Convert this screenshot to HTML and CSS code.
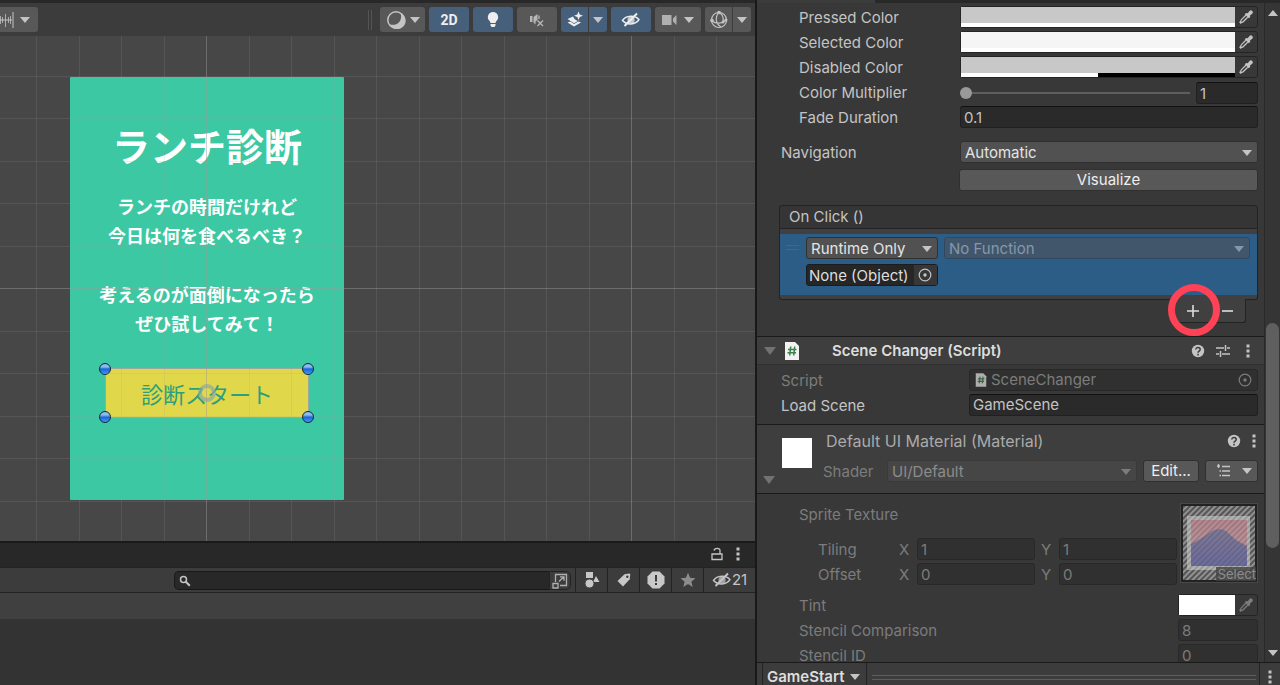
FILE: index.html
```html
<!DOCTYPE html>
<html lang="ja">
<head>
<meta charset="utf-8">
<title>GameStart</title>
<link rel="stylesheet" href="styles.css">
</head>
<body>
<svg class="defs" aria-hidden="true">
  <symbol id="dropper" viewBox="0 0 14 14"><path d="M7.200 3l1.500.2 1.800-2.200a1.900 1.900 0 0 1 2.700 2.700l-2.200 1.800.2 1.500-1.500 1.300-4-4z" fill="currentColor"/><path d="M6.800 5.300L2.500 9.600c-.7.700-.7 1.200-.8 1.900l-.7.800.7.700.8-.7c.7-.1 1.200-.1 1.900-.8L8.700 7.200" fill="none" stroke="currentColor" stroke-width="1.300"/></symbol>
  <symbol id="target" viewBox="0 0 14 14"><circle cx="7" cy="7" r="5.800" fill="none" stroke="currentColor" stroke-width="1.200"/><circle cx="7" cy="7" r="1.700" fill="currentColor"/></symbol>
  <symbol id="script" viewBox="0 0 16 18"><path d="M1 0h10l4 4v14H1z" fill="#f2f2f2"/><path d="M6.700 4.500l-1 9M10.700 4.500l-1 9M4 7.500h8.500M3.500 10.800H12" fill="none" stroke="#3d8049" stroke-width="1.500"/></symbol>
  <symbol id="help" viewBox="0 0 14 14"><circle cx="7" cy="7" r="6.200" fill="currentColor"/><path d="M4.800 5.500c0-2.700 4.400-2.600 4.400 0 0 1.500-2.200 1.600-2.200 3.200M7 9.800v1.600" fill="none" stroke="#3c3c3c" stroke-width="1.500"/></symbol>
  <symbol id="kebab" viewBox="0 0 4 14"><path d="M.5.500h3v3h-3zM.5 5.500h3v3h-3zM.5 10.500h3v3h-3z" fill="currentColor"/></symbol>
  <symbol id="hidden" viewBox="0 0 20 16"><path d="M1.500 8.500C5 3.200 14 2.800 18 7.700 14.500 13 5.500 13.300 1.500 8.500z" fill="none" stroke="currentColor" stroke-width="1.500"/><path d="M10 4.500a3.600 3.600 0 1 0 .1 7.200 3.600 3.600 0 0 0-.1-7.200z" fill="currentColor" opacity=".75"/><path d="M3.500 14L16 1.500" stroke="currentColor" stroke-width="1.900"/></symbol>
</svg>

<main class="left">
  <div class="toolbar">
    <button class="tool wave" aria-label="Snap"><svg width="14" height="18" viewBox="0 0 14 18"><path d="M.5 5v8M2.500 6v6M5.500 3v13M8.500 6v6M10.500 5v8" stroke="#aaa" fill="none"/><path d="M0 9h12M13 1v16" stroke="#c4c4c4"/></svg><i class="tri"></i></button>
    <span class="grip"></span>
    <button class="tool shade" aria-label="Draw mode"><svg width="20" height="20" viewBox="0 0 20 20"><circle cx="10" cy="10" r="8.200" fill="none" stroke="#c4c4c4" stroke-width="1.500"/><path d="M14.500 2.800a8.500 8.500 0 1 1-11 11.500c8 2.500 13.500-4 11-11.500z" fill="#c4c4c4"/></svg><i class="tri"></i></button>
    <button class="tool on">2D</button>
    <button class="tool on" aria-label="Lighting"><svg width="14" height="18" viewBox="0 0 14 18"><path d="M7 1a5.200 5.200 0 0 0-3 9.400L4.500 12h5l.5-1.600A5.200 5.200 0 0 0 7 1zM4.500 13h5v1.500L8.500 16h-3l-1-1.500z" fill="#eee"/></svg></button>
    <button class="tool" aria-label="Audio"><svg width="16" height="16" viewBox="0 0 16 16"><path d="M1 4h2.500v6H1zM4.500 5L8.500 2v6L6.500 9.500v3l-2-2z" fill="#b8b8b8"/><path d="M8.500 8.500l5.500 5.500M14 8.500L8.500 14M10 3.500v3.500" fill="none" stroke="#b8b8b8" stroke-width="1.300"/></svg></button>
    <span class="pair"><button class="tool on fx" aria-label="Effects"><svg width="18" height="18" viewBox="0 0 18 18"><path d="M12.500.500l1.200 3 3.300 1.300-3.300 1.300-1.200 3-1.200-3L8 4.800l3.300-1.300z" fill="#eee"/><path d="M1.500 8L7 5.500 8.500 8l3 2L15 8.200 8 12.200z" fill="#eee"/><path d="M1.500 11.500l3-1 3.500 2.400 4.500-2.400 2.500 1L8 15.500z" fill="#eee"/></svg></button><button class="tool on mini" aria-label="Effects menu"><i class="tri"></i></button></span>
    <button class="tool on" aria-label="Visibility"><svg width="20" height="16" color="#eee"><use href="#hidden"/></svg></button>
    <button class="tool cam" aria-label="Camera"><svg width="16" height="12" viewBox="0 0 16 12"><path d="M0 1h9.500v10H0zM11 4.500L14.500 1v10L11 7.500z" fill="#b0b0b0"/></svg><i class="tri"></i></button>
    <span class="pair"><button class="tool giz" aria-label="Gizmos"><svg width="20" height="20" viewBox="0 0 20 20" fill="none" stroke="#c4c4c4" stroke-width="1.200"><circle cx="10" cy="10" r="7.500"/><path d="M10 2C6 7 6 13 12 17M10 2c4 3 5 6 4 10M3 11c4 3 10 3 14-1"/><g fill="#c4c4c4" stroke="none"><circle cx="10" cy="2.500" r="1.800"/><circle cx="3" cy="10.500" r="1.800"/><circle cx="17" cy="10" r="1.500"/><circle cx="14" cy="12" r="1.500"/></g></svg></button><button class="tool mini" aria-label="Gizmos menu"><i class="tri"></i></button></span>
  </div>

  <section class="scene">
    <div class="card">
      <h1>ランチ診断</h1>
      <p>ランチの時間だけれど<br>今日は何を食べるべき？</p>
      <p>考えるのが面倒になったら<br>ぜひ試してみて！</p>
      <button class="start">診断スタート
        <i class="handle tl"></i><i class="handle tr"></i><i class="handle bl"></i><i class="handle br"></i><i class="pivot"></i>
      </button>
    </div>
    <svg class="grid" aria-hidden="true">
      <defs><pattern id="g" x="206" y="252" width="425" height="425" patternUnits="userSpaceOnUse">
        <path d="M43.500 0V425M85.500 0V425M128.500 0V425M170.500 0V425M213.500 0V425M255.500 0V425M298.500 0V425M340.500 0V425M383.500 0V425M0 43.500H425M0 85.500H425M0 128.500H425M0 170.500H425M0 213.500H425M0 255.500H425M0 298.500H425M0 340.500H425M0 383.500H425" stroke="#999" stroke-opacity=".17"/>
        <path d="M.5 0V425M0 .5H425" stroke="#999" stroke-opacity=".45"/>
      </pattern></defs>
      <rect width="100%" height="100%" fill="url(#g)"/>
    </svg>
  </section>

  <section class="project">
    <div class="tabs">
      <svg width="12" height="14" viewBox="0 0 12 14" fill="none" stroke="#c4c4c4" stroke-width="1.300"><path d="M1 7h10v5.500H1zM3 3.500C3.500 1 9 .5 9 3.500V7"/></svg>
      <svg width="4" height="14"><use href="#kebab"/></svg>
    </div>
    <div class="finder">
      <label class="search"><svg width="12" height="12" viewBox="0 0 12 12" fill="none" stroke="#c4c4c4" stroke-width="1.500"><circle cx="4.500" cy="4.500" r="3"/><path d="M6.800 6.800l4 4" stroke-width="2"/></svg><input type="text" aria-label="Search"></label>
      <button class="expand" aria-label="Open search"><svg width="16" height="16" viewBox="0 0 16 16" fill="none" stroke="#b0b0b0" stroke-width="1.300"><path d="M3.500 9V1.500h11v11H8M1 10.500h5V15H1zM7 8.500l4.500-4.500M8 3.800h4v4"/></svg></button>
      <button aria-label="Type"><svg width="16" height="18" viewBox="0 0 16 18" fill="#c8c8c8"><path d="M2 1h7v6H2zM12 5l3.500 6H9z"/><circle cx="5.500" cy="12.500" r="4.500" stroke="#3c3c3c"/></svg></button>
      <button aria-label="Label"><svg width="14" height="14" viewBox="0 0 14 14"><path d="M.5 8L7.500 1.200l5-.7.800.8-.6 5L6 13.500z" fill="#c8c8c8"/><circle cx="10.300" cy="3.700" r="1.200" fill="#3c3c3c"/></svg></button>
      <button aria-label="Issues"><svg width="18" height="18" viewBox="0 0 18 18"><path d="M5.500.500h7l5 5v7l-5 5h-7l-5-5v-7z" fill="#c8c8c8"/><path d="M9 4v6.500M9 12v2" stroke="#3c3c3c" stroke-width="2"/></svg></button>
      <button aria-label="Favorites"><svg width="16" height="16" viewBox="0 0 16 16"><path d="M8 .8l2.100 5 5.400.4-4.100 3.500 1.300 5.300L8 12.100 3.300 15l1.300-5.300L.5 6.200l5.400-.4z" fill="#8c8c8c"/></svg></button>
      <button class="count"><svg width="20" height="16"><use href="#hidden"/></svg>21</button>
    </div>
    <div class="crumbs"></div>
  </section>
</main>

<aside class="inspector">
  <div class="strip"><span></span></div>
  <div class="view">
    <div class="content">
      <section class="props">
        <div class="row sub"><span>Pressed Color</span><button class="color" aria-label="Pressed Color"><span class="swatch gray"><i></i></span><svg width="14" height="14"><use href="#dropper"/></svg></button></div>
        <div class="row sub"><span>Selected Color</span><button class="color" aria-label="Selected Color"><span class="swatch pale"><i></i></span><svg width="14" height="14"><use href="#dropper"/></svg></button></div>
        <div class="row sub"><span>Disabled Color</span><button class="color" aria-label="Disabled Color"><span class="swatch gray half"><i></i></span><svg width="14" height="14"><use href="#dropper"/></svg></button></div>
        <div class="row sub"><label for="mult">Color Multiplier</label><div class="slide"><input type="range" id="mult" min="1" max="5" value="1"><input type="text" class="field" value="1" aria-label="Color Multiplier value"></div></div>
        <div class="row sub"><label for="fade">Fade Duration</label><input type="text" class="field" id="fade" value="0.1"></div>
        <div class="row nav"><label for="nav">Navigation</label><span class="drop"><select id="nav"><option>Automatic</option></select></span></div>
        <div class="row vis"><span></span><button class="btn">Visualize</button></div>

        <div class="event">
          <div class="event-head">On Click ()</div>
          <div class="event-body">
            <div class="entry">
              <span class="lines"></span>
              <span class="drop"><select aria-label="Call state"><option>Runtime Only</option></select></span>
              <span class="drop faded"><select disabled aria-label="Function"><option>No Function</option></select></span>
              <div class="object"><span>None (Object)</span><button aria-label="Pick object"><svg width="14" height="14"><use href="#target"/></svg></button></div>
            </div>
          </div>
          <div class="event-foot">
            <button class="plus" aria-label="Add"><svg width="12" height="12" viewBox="0 0 12 12"><path d="M6 0v12M0 6h12" stroke="#ddd" stroke-width="1.600"/></svg><i class="ring"></i></button>
            <button aria-label="Remove"><svg width="12" height="12" viewBox="0 0 12 12"><path d="M0 6h11" stroke="#ddd" stroke-width="1.600"/></svg></button>
          </div>
        </div>
      </section>

      <section class="component">
        <header class="comp-head">
          <i class="fold"></i><svg width="16" height="18"><use href="#script"/></svg><h2>Scene Changer (Script)</h2>
          <svg width="14" height="14"><use href="#help"/></svg>
          <svg width="14" height="14" viewBox="0 0 14 14" stroke="#c4c4c4" stroke-width="1.500"><path d="M0 4h8M11 4h3M9.500 1v6M0 10h3M6 10h8M4.500 7v6"/></svg>
          <svg class="menu" width="4" height="14"><use href="#kebab"/></svg>
        </header>
        <div class="row wide dim"><span>Script</span><div class="field asset"><svg width="12" height="14"><use href="#script"/></svg><span>SceneChanger</span><svg width="14" height="14"><use href="#target"/></svg></div></div>
        <div class="row wide"><label for="load">Load Scene</label><input type="text" class="field" id="load" value="GameScene"></div>
      </section>

      <section class="material">
        <i class="fold"></i><span class="preview"></span>
        <div class="mat-main">
          <div class="mat-title"><h2>Default UI Material (Material)</h2><svg width="14" height="14"><use href="#help"/></svg><svg width="4" height="14"><use href="#kebab"/></svg></div>
          <div class="mat-shader"><label for="shader">Shader</label><span class="drop faint"><select id="shader" disabled><option>UI/Default</option></select></span><button class="btn">Edit...</button><button class="btn list" aria-label="Presets"><svg width="14" height="14" viewBox="0 0 14 14" stroke="#c4c4c4" stroke-width="1.300"><path d="M0 2h3M5 2.500h8M5 7h8M5 11.500h8M2.500 7H4M2.500 11.500H4M1.500 0v4"/></svg><i class="tri"></i></button></div>
        </div>
      </section>

      <section class="shader dim">
        <div class="texture">
          <div class="tex-rows">
            <span class="tex-name">Sprite Texture</span>
            <div class="vec"><span>Tiling</span><label for="tx">X</label><input class="field" id="tx" value="1" disabled><label for="ty">Y</label><input class="field" id="ty" value="1" disabled></div>
            <div class="vec"><span>Offset</span><label for="ox">X</label><input class="field" id="ox" value="0" disabled><label for="oy">Y</label><input class="field" id="oy" value="0" disabled></div>
          </div>
          <button class="thumb" disabled>
            <svg width="72" height="74" viewBox="0 0 72 74"><defs><pattern id="h" width="4" height="4" patternUnits="userSpaceOnUse" patternTransform="rotate(45)"><path d="M1 0V4" stroke="#444" stroke-width="2" stroke-opacity=".7"/></pattern><linearGradient id="sky" x2="0" y2="1"><stop stop-color="#b88890"/><stop offset="1" stop-color="#c09ca0"/></linearGradient><linearGradient id="hill" x2="0" y2="1"><stop stop-color="#7f7898"/><stop offset="1" stop-color="#6d6ca0"/></linearGradient></defs><path d="M0 0h72v74H0z" fill="#929292"/><path d="M0 0h72v74H0z" fill="url(#h)"/><path d="M4 10h63v54H4z" fill="#b4b4b4"/><path d="M8 14h56v46H8z" fill="url(#sky)"/><path d="M8 38l9-5 12-8q8-4 14 0l10 9 11 6v20H8z" fill="url(#hill)"/><path d="M0 0h72v74H0z" fill="url(#h)" opacity=".35"/></svg>
            <span>Select</span>
          </button>
        </div>
        <div class="row stencil"><span>Tint</span><button class="color" disabled aria-label="Tint"><span class="swatch white"></span><svg width="14" height="14"><use href="#dropper"/></svg></button></div>
        <div class="row stencil"><label for="sc">Stencil Comparison</label><input class="field" id="sc" value="8" disabled></div>
        <div class="row stencil"><label for="si">Stencil ID</label><input class="field" id="si" value="0" disabled></div>
      </section>
    </div>
    <div class="scroll"><i class="up"></i><span class="thumbbar"></span><i class="down"></i></div>
  </div>
  <footer class="foot"><button class="asset-name">GameStart<i class="tri"></i></button><span class="rules"></span><button class="more" aria-label="More"><svg width="4" height="14"><use href="#kebab"/></svg></button></footer>
</aside>
</body>
</html>
```
FILE: styles.css
```css
* { box-sizing: border-box; }
body {
  margin: 0;
  height: 100vh;
  display: grid;
  grid-template-columns: minmax(0, 1fr) 525px;
  overflow: hidden;
  background: #383838;
  color: #c4c4c4;
  font: 15px/22px Inter, "Noto Sans CJK JP", sans-serif;
}
.defs { position: absolute; width: 0; height: 0; }
button, input, select { font: inherit; color: inherit; margin: 0; padding: 0; border: 0; background: none; }
button { display: flex; align-items: center; justify-content: center; }
svg { display: block; flex: none; }
h1, h2, p { margin: 0; }
.tri { flex: none; border: 5px solid transparent; border-top: 6px solid #c4c4c4; border-bottom: 0; }

.left { display: flex; flex-direction: column; min-width: 0; height: 100vh; }
.toolbar {
  display: flex; align-items: center; gap: 4px;
  height: 36px; padding-right: 4px;
  background: #3c3c3c; border-top: 3px solid #282828;
}
.tool { width: 40px; height: 25px; background: #585858; border-radius: 3px; }
.tool.on { background: #46607c; color: #eee; font: bold 14px/22px Roboto, sans-serif; }
.tool.wave { width: 38px; gap: 6px; margin-right: auto; justify-content: flex-start; border-radius: 0 3px 3px 0; }
.tool.shade { width: 45px; gap: 4px; }
.tool.cam { width: 46px; gap: 6px; }
.tool.giz, .tool.fx { width: 27px; }
.tool.mini { width: 18px; }
.pair { display: flex; gap: 1px; }
.pair .tool:first-child { border-radius: 3px 0 0 3px; }
.pair .tool:last-child { border-radius: 0 3px 3px 0; }
.grip { width: 4px; height: 20px; margin-right: 4px; border: solid #545454; border-width: 0 1px; }

.scene { position: relative; flex: 1; overflow: hidden; background: #474747; }
.grid { position: absolute; inset: 0; width: 100%; height: 100%; pointer-events: none; }
.card {
  position: absolute; left: 70px; top: 41px; width: 274px; height: 423px;
  padding-top: 39px; border-radius: 1px; background: #3cc8a2; color: #fff; text-align: center;
  font-family: "Noto Sans CJK JP", sans-serif;
}
.card h1 { font-size: 38px; line-height: 58px; font-weight: 700; margin-bottom: 18px; }
.card p { font-size: 18px; line-height: 29px; font-weight: 700; margin-bottom: 30px; white-space: nowrap; }
.start {
  position: relative; width: 204px; height: 50px; margin: 0 35px;
  background: #e0d74a; border: 1px solid #9aa8a0; color: #2b9f7e; font-size: 22px;
}
.handle {
  position: absolute; width: 12px; height: 12px; border-radius: 50%;
  border: 1px solid #15253c; background: linear-gradient(#8bbcf0 0 30%, #1765d8 50%, #3f9bf5);
}
.tl { left: -7px; top: -6px; } .tr { right: -6px; top: -6px; }
.bl { left: -7px; bottom: -6px; } .br { right: -6px; bottom: -6px; }
.pivot { position: absolute; left: 92px; top: 15px; width: 18px; height: 18px; border: 4px solid #8aa9a0; border-radius: 50%; opacity: .7; }

.project { height: 144px; border-top: 2px solid #1a1a1a; background: #333; }
.tabs { display: flex; align-items: center; justify-content: flex-end; gap: 13px; height: 24px; padding: 0 15px 2px 0; background: #282828; }
.finder { display: flex; height: 26px; background: #3c3c3c; border: solid #232323; border-width: 1px 0; }
.finder button { width: 32px; border-left: 1px solid #232323; }
.search { flex: 1; display: flex; align-items: center; gap: 8px; margin: 3px 0 2px 174px; padding-left: 4px; background: #282828; border: 1px solid #191919; border-right: 0; border-radius: 5px 0 0 5px; }
.search input { flex: 1; min-width: 0; outline: 0; }
.finder .expand { width: 22px; margin: 3px 4px 2px 0; border: 1px solid #232323; border-radius: 0 5px 5px 0; }
.finder .count { width: 52px; }
.crumbs { height: 26px; background: #404040; }

.inspector { display: flex; flex-direction: column; height: 100vh; min-width: 0; border-left: 2px solid #191919; }
.strip { height: 3px; flex: none; background: #282828; }
.strip span { display: block; width: 118px; height: 3px; background: #3c3c3c; }
.view { flex: 1; display: flex; min-height: 0; }
.content { flex: 1; min-width: 0; overflow: hidden; }
.row { display: grid; grid-template-columns: 203px minmax(0, 1fr); height: 22px; margin-bottom: 3px; padding-right: 6px; }
.row > :first-child { padding-left: 24px; }
.row.sub > :first-child { padding-left: 42px; }
.props { padding: 3px 0 13px; }
.color { justify-content: flex-start; height: 22px; border: 1px solid #242424; border-radius: 3px; }
.color svg { margin: 0 auto; }
.swatch { display: flex; align-items: flex-end; width: calc(100% - 22px); height: 20px; background: #c8c8c8; }
.swatch i { width: 100%; height: 4px; background: #fff; }
.swatch.pale { background: #f5f5f5; }
.swatch.white { background: #fff; }
.swatch.half i { background: linear-gradient(90deg, #fff 50%, #000 50%); }
.field { width: 100%; min-width: 0; height: 22px; padding: 2px 3px 0; background: #2a2a2a; border: 1px solid #202020; border-top-color: #111; border-radius: 3px; outline: 0; }
.slide { display: grid; grid-template-columns: minmax(0, 1fr) 62px; gap: 6px; align-items: center; }
.slide input[type="range"] { appearance: none; width: 100%; height: 14px; background: linear-gradient(#5e5e5e, #5e5e5e) center / 100% 2px no-repeat; }
.slide input[type="range"]::-webkit-slider-thumb { appearance: none; width: 12px; height: 12px; border-radius: 50%; background: #999; }
.row.sub > :first-child { line-height: 24px; }
.nav { margin: 13px 0 6px; }
.nav label { line-height: 24px; }
.drop { position: relative; display: block; }
.drop select { appearance: none; display: block; width: 100%; height: 22px; padding: 0 4px 1px; color: #e4e4e4; background: #515151; border: 1px solid #303030; border-radius: 3px; opacity: 1; }
.drop::after { content: ""; position: absolute; right: 6px; top: 9px; border: 5px solid transparent; border-top: 6px solid #c4c4c4; border-bottom: 0; pointer-events: none; }
.btn { height: 22px; color: #eee; background: #585858; border: 1px solid #303030; border-radius: 3px; }
.vis { grid-template-columns: 202px minmax(0, 1fr); }

.event { margin: 14px 6px 0 22px; }
.event-head { height: 24px; padding-left: 9px; line-height: 22px; background: #353535; border: 1px solid #232323; border-radius: 3px 3px 0 0; }
.event-body { padding: 5px 0 4px; background: #404040; border: 1px solid #232323; border-top: 0; border-radius: 0 0 3px 3px; }
.entry { display: grid; grid-template-columns: 20px 132px minmax(0, 1fr); column-gap: 6px; row-gap: 4px; padding: 3px 7px 9px 0; background: #2c5d87; height: 61px; }
.lines { width: 13px; height: 5px; margin: 8px 0 0 6px; border: solid #4b6478; border-width: 1px 0; }
.drop.faded select { color: #8498ab; background: #42566b; border-color: #30485f; }
.drop.faded::after { border-top-color: #8498ab; }
.object { grid-column: 2; display: flex; height: 22px; background: #262626; border: 1px solid #1c1c1c; border-radius: 3px; padding-left: 2px; color: #ddd; line-height: 21px; white-space: nowrap; }
.object button { flex: 1; margin-left: 5px; background: #373737; color: #c4c4c4; }
.event-foot { display: flex; width: 72px; height: 24px; margin: -1px 12px 0 auto; background: #404040; border: 1px solid #232323; border-top: 0; border-radius: 0 0 3px 3px; }
.event-foot button { flex: 1; }
.plus { position: relative; }
.ring { position: absolute; left: -7px; top: -15px; width: 52px; height: 52px; border: 7px solid #ff4255; border-radius: 50%; }

.component { height: 88px; border-top: 1px solid #1a1a1a; }
.comp-head { display: flex; align-items: center; height: 28px; margin-bottom: 4px; padding: 1px 14px 0 7px; background: #3e3e3e; border-bottom: 1px solid #303030; gap: 11px; }
.comp-head h2 { flex: 1; padding-left: 21px; font-size: 15px; font-weight: 600; color: #ddd; }
.comp-head > svg:first-of-type { margin-left: -3px; }
.comp-head .menu { margin-left: 5px; }
.fold { flex: none; border: 6px solid transparent; border-top: 8px solid #727272; border-bottom: 0; }
.row.wide { grid-template-columns: 212px minmax(0, 1fr); }
.row.wide > :first-child { line-height: 24px; }
.dim { color: #7c7c7c; }
.dim .field { background: #303030; border-color: #282828; }
.row.wide .field { padding-top: 0; }
.asset { display: flex; align-items: center; gap: 4px; padding: 0 5px; }
.asset span { flex: 1; }
.asset svg:first-child { opacity: .65; }

.material { display: flex; height: 69px; padding: 4px 6px 0 6px; background: #3e3e3e; border-top: 1px solid #1a1a1a; }
.material .fold { align-self: flex-end; margin-bottom: 9px; }
.preview { flex: none; width: 30px; height: 30px; margin: 9px 11px 0 7px; background: #fff; }
.mat-main { flex: 1; min-width: 0; }
.mat-title { display: flex; align-items: center; gap: 11px; height: 24px; margin-bottom: 7px; padding: 0 2px 0 3px; }
.mat-title h2 { flex: 1; font-size: 16px; font-weight: 400; color: #aaa; }
.mat-shader { display: flex; gap: 6px; color: #7c7c7c; }
.mat-shader label { width: 58px; line-height: 24px; }
.mat-shader .drop { flex: 1; }
.drop.faint select { color: #8c8c8c; background: #464646; border-color: #3a3a3a; }
.drop.faint::after { border-top-color: #7c7c7c; }
.mat-shader .btn { width: 56px; }
.mat-shader .list { gap: 11px; width: 53px; padding-left: 6px; }

.shader { border-top: 1px solid #1a1a1a; padding-top: 9px; }
.texture { display: flex; justify-content: space-between; padding-right: 6px; margin-bottom: 11px; height: 80px; }
.tex-rows { flex: 1; min-width: 0; }
.tex-name { display: block; height: 35px; padding: 1px 0 0 42px; }
.vec { display: grid; grid-template-columns: 75px 18px minmax(0, 1fr) 18px minmax(0, 1fr); column-gap: 3px; height: 22px; margin-bottom: 3px; padding-left: 61px; line-height: 24px; }
.vec > span { margin-right: -12px; }
.vec label { padding-left: 3px; }
.thumb { position: relative; flex: none; width: 78px; height: 80px; margin-left: 3px; border: 1px solid #484848; background: #222; }
.thumb span { position: absolute; right: 1px; bottom: 1px; padding-left: 2px; font-size: 13px; line-height: 14px; color: #8c8c8c; background: #444c; }
.row.stencil { grid-template-columns: minmax(0, 1fr) 80px; }
.row.stencil > :first-child { padding-left: 42px; line-height: 24px; }
.scroll { display: flex; flex-direction: column; align-items: center; width: 16px; padding: 7px 0 6px; background: #353535; border-left: 1px solid #292929; }
.up { border: 5px solid transparent; border-bottom: 6px solid #c4c4c4; border-top: 0; }
.down { border: 5px solid transparent; border-top: 6px solid #c4c4c4; border-bottom: 0; }
.thumbbar { width: 13px; height: 225px; margin: auto 0 102px; border-radius: 7px; background: #5f5f5f; }
.foot { flex: none; display: flex; align-items: center; height: 23px; padding-left: 5px; background: #3c3c3c; border-top: 1px solid #1a1a1a; }
.asset-name { height: 22px; gap: 6px; padding: 5px 6px 0 4px; border: solid #232323; border-width: 0 1px; font-weight: 600; color: #ddd; }
.rules { flex: 1; height: 5px; margin: 6px 3px 0 5px; border: solid #5e5e5e; border-width: 1px 0; }
.more { width: 21px; height: 22px; padding-top: 5px; border-left: 1px solid #232323; }
```
